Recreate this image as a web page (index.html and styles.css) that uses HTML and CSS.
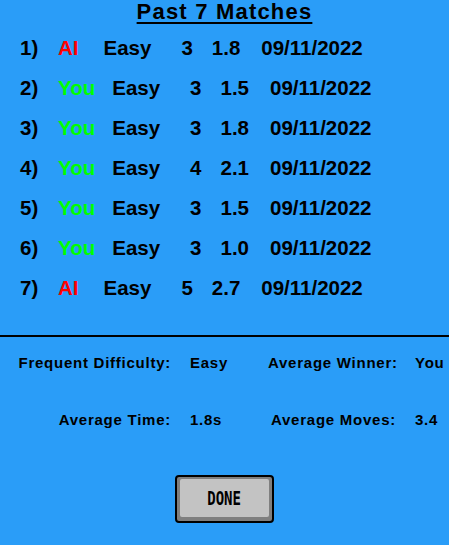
FILE: index.html
```html
<!DOCTYPE html>
<html>
<head>
<meta charset="utf-8">
<link rel="stylesheet" href="styles.css">
</head>
<body>
<div class="screen">
  <h1 class="title">Past 7 Matches</h1>
  <div class="matches">
    <div class="row"><span class="idx">1)</span><span class="name ai">AI</span><span class="diff">Easy</span><span class="moves">3</span><span class="time">1.8</span><span class="date">09/11/2022</span></div>
    <div class="row"><span class="idx">2)</span><span class="name you">You</span><span class="diff">Easy</span><span class="moves">3</span><span class="time">1.5</span><span class="date">09/11/2022</span></div>
    <div class="row"><span class="idx">3)</span><span class="name you">You</span><span class="diff">Easy</span><span class="moves">3</span><span class="time">1.8</span><span class="date">09/11/2022</span></div>
    <div class="row"><span class="idx">4)</span><span class="name you">You</span><span class="diff">Easy</span><span class="moves">4</span><span class="time">2.1</span><span class="date">09/11/2022</span></div>
    <div class="row"><span class="idx">5)</span><span class="name you">You</span><span class="diff">Easy</span><span class="moves">3</span><span class="time">1.5</span><span class="date">09/11/2022</span></div>
    <div class="row"><span class="idx">6)</span><span class="name you">You</span><span class="diff">Easy</span><span class="moves">3</span><span class="time">1.0</span><span class="date">09/11/2022</span></div>
    <div class="row"><span class="idx">7)</span><span class="name ai">AI</span><span class="diff">Easy</span><span class="moves">5</span><span class="time">2.7</span><span class="date">09/11/2022</span></div>
  </div>
  <hr class="divider">
  <div class="stats">
    <span class="label">Frequent Difficulty:</span><span class="value">Easy</span>
    <span class="label">Average Winner:</span><span class="value">You</span>
    <span class="label">Average Time:</span><span class="value">1.8s</span>
    <span class="label">Average Moves:</span><span class="value">3.4</span>
  </div>
  <div class="actions">
    <button class="done"><span class="done-face"><span class="done-text">DONE</span></span></button>
  </div>
</div>
</body>
</html>
```
FILE: styles.css
```css
html, body {
  margin: 0;
  padding: 0;
  background: #2a9df8;
}
body {
  width: 449px;
  height: 545px;
  overflow: hidden;
  font-family: "Liberation Sans", Arial, sans-serif;
  font-weight: bold;
  color: #000;
}
.screen {
  display: flex;
  flex-direction: column;
}
.title {
  margin: 0;
  text-align: center;
  font-size: 22px;
  line-height: 24px;
  letter-spacing: 1.2px;
  text-decoration: underline;
  text-decoration-thickness: 2px;
  text-underline-offset: 3px;
}
.matches {
  margin-top: 4px;
  display: flex;
  flex-direction: column;
}
.row {
  display: flex;
  height: 40px;
  line-height: 40px;
  font-size: 20.5px;
  padding-left: 20px;
  white-space: nowrap;
}
.idx { width: 38px; }
.name { margin-right: 17px; }
.ai { color: #ff0000; padding-right: 8px; }
.you { color: #00ff00; }
.diff { margin-right: 30px; }
.moves { margin-right: 19px; }
.time { margin-right: 21px; }
.divider {
  margin: 27px 0 0 0;
  border: 0;
  height: 2px;
  background: #000;
}
.stats {
  margin-top: 16px;
  display: grid;
  grid-template-columns: 171px 61px 128px 35px;
  column-gap: 18px;
  row-gap: 37px;
  font-size: 15px;
  line-height: 20px;
  letter-spacing: 0.75px;
  white-space: nowrap;
}
.label { text-align: right; }
.value { text-align: left; padding-left: 1px; }
.actions {
  margin-top: 45px;
  display: flex;
  justify-content: center;
}
.done {
  width: 99px;
  height: 48px;
  margin: 0;
  padding: 2px 3px 4px 3px;
  border: 2px solid #000;
  border-radius: 4px;
  background: #7f7f7f;
  box-sizing: border-box;
  display: flex;
  cursor: pointer;
}
.done-face {
  flex: 1;
  background: #c3c3c3;
  border-radius: 2px;
  display: flex;
  align-items: center;
  justify-content: center;
}
.done-text {
  font-family: "DejaVu Sans Mono", monospace;
  font-weight: bold;
  font-size: 20px;
  line-height: 20px;
  color: #000;
  display: inline-block;
  transform: scaleX(0.7);
}
```
